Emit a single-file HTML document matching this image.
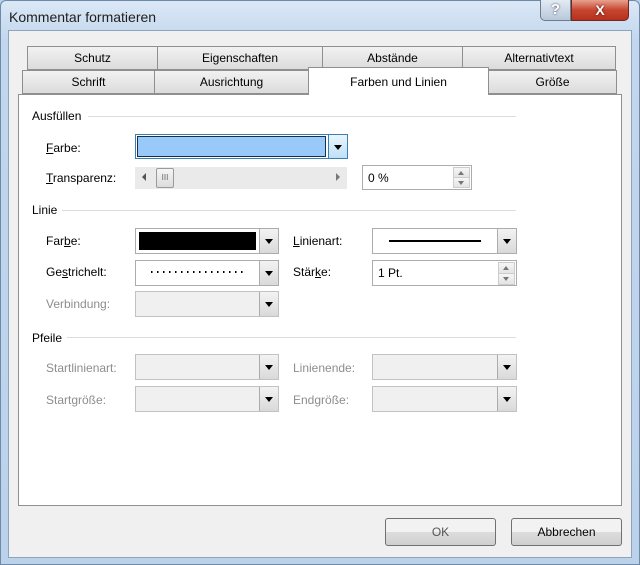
<!DOCTYPE html>
<html><head><meta charset="utf-8"><style>
*{box-sizing:border-box;margin:0;padding:0}
body{width:640px;height:565px;overflow:hidden;font-family:"Liberation Sans",sans-serif;font-size:12px;color:#000;position:relative;background:#b9d1ea}
.a{position:absolute}
.frame{left:0;top:0;width:640px;height:565px;background:linear-gradient(#dbe8f6,#c2d6ed 40px,#bcd2ea);border:1px solid #6d8aa8;border-radius:6px 6px 0 0}
.body{left:8px;top:30px;width:624px;height:528px;background:#f0f0f0;border:1px solid #8ea4bd}
.tab{position:absolute;height:24px;background:linear-gradient(#f2f2f2,#dcdcdc);border:1px solid #8e8f8f;text-align:center;line-height:22px;font-size:12px}
.panel{left:18px;top:94px;width:604px;height:412px;background:#fff;border:1px solid #8e8f8f}
.lbl{position:absolute;font-size:12px}
.dis{color:#8d8d8d}
.sec{position:absolute;font-size:12px}
.line{position:absolute;height:1px;background:#dcdcdc}
.cb{position:absolute;height:26px;border:1px solid #acacac;background:#fff}
.cb.d{background:#f0f0f0;border-color:#c2c2c2}
.btn{position:absolute;right:0;top:0;width:19px;height:100%;border-left:1px solid #acacac;background:linear-gradient(#f3f3f3,#d9d9d9)}
.btn:after{content:"";position:absolute;left:5px;top:10px;border-left:4px solid transparent;border-right:4px solid transparent;border-top:5px solid #000}
.sp{position:absolute;right:1px;width:17px;border:1px solid #ccc;background:linear-gradient(#f6f6f6,#e4e4e4)}
.up:after,.dn:after{content:"";position:absolute;left:4px;border-left:3px solid transparent;border-right:3px solid transparent}
.up:after{top:3px;border-bottom:4px solid #777}
.dn:after{top:3px;border-top:4px solid #777}
.pb{position:absolute;height:28px;border:1px solid #707070;border-radius:3px;background:linear-gradient(#f2f2f2 50%,#dddddd 50%,#cfcfcf);text-align:center;line-height:26px;font-size:12px}
u{text-decoration:underline}
</style></head><body>
<div class="a frame"></div>
<div class="a" style="left:9px;top:9px;font-size:14px;color:#1e1e1e">Kommentar formatieren</div>
<div class="a" style="left:540px;top:0;width:31px;height:21px;border:1px solid #6d7d90;border-top:none;border-radius:0 0 0 5px;background:linear-gradient(#e3ebf4,#b8c8da);text-align:center;color:#fff;font-weight:bold;font-size:15px;line-height:20px;text-shadow:0 0 2px #445">?</div>
<div class="a" style="left:571px;top:0;width:58px;height:21px;border:1px solid #6a2a20;border-top:none;border-radius:0 0 5px 0;background:linear-gradient(#e8a290,#c7452f 50%,#b8301d);text-align:center;color:#fff;font-weight:bold;font-size:14px;line-height:20px;text-shadow:0 0 2px #400">X</div>
<div class="a body"></div>
<div class="tab" style="left:27px;top:46px;width:131px">Schutz</div>
<div class="tab" style="left:157px;top:46px;width:166px">Eigenschaften</div>
<div class="tab" style="left:322px;top:46px;width:141px">Abstände</div>
<div class="tab" style="left:462px;top:46px;width:154px">Alternativtext</div>
<div class="tab" style="left:22px;top:70px;width:133px">Schrift</div>
<div class="tab" style="left:154px;top:70px;width:155px">Ausrichtung</div>
<div class="tab" style="left:488px;top:70px;width:129px">Größe</div>
<div class="a panel"></div>
<div class="tab" style="left:308px;top:67px;width:181px;height:28px;background:#fff;border-bottom:none;line-height:28px">Farben und Linien</div>

<div class="sec" style="left:32px;top:109px">Ausfüllen</div><div class="line" style="left:88px;top:116px;width:428px"></div>
<div class="lbl" style="left:46px;top:141px"><u>F</u>arbe:</div>
<div class="cb" style="left:135px;top:134px;width:213px;height:25px;border:1px solid #3c7fb1;background:#fff"><div class="a" style="left:1px;top:1px;right:21px;bottom:1px;background:#99c9f8;border:1px solid #12324d"></div><div class="btn" style="background:linear-gradient(#eaf5fd,#bfe0f7);border-left-color:#3c7fb1"></div></div>
<div class="lbl" style="left:46px;top:171px"><u>T</u>ransparenz:</div>
<div class="a" style="left:135px;top:167px;width:212px;height:22px;background:#eaeaea"></div>
<div class="a" style="left:142px;top:173px;border-top:4px solid transparent;border-bottom:4px solid transparent;border-right:4px solid #555"></div>
<div class="a" style="left:336px;top:173px;border-top:4px solid transparent;border-bottom:4px solid transparent;border-left:4px solid #777"></div>
<div class="a" style="left:156px;top:168px;width:18px;height:20px;border:1px solid #9a9a9a;border-radius:2px;background:linear-gradient(#f5f5f5,#dcdcdc);font-size:8px;text-align:center;line-height:18px;color:#666">III</div>
<div class="cb" style="left:362px;top:165px;width:110px;height:25px"><div class="a" style="left:5px;top:5px">0 %</div><div class="sp up" style="top:1px;height:11px"></div><div class="sp dn" style="top:11px;height:11px"></div></div>

<div class="sec" style="left:32px;top:203px">Linie</div><div class="line" style="left:62px;top:210px;width:454px"></div>
<div class="lbl" style="left:46px;top:234px">Far<u>b</u>e:</div>
<div class="cb" style="left:135px;top:228px;width:144px"><div class="a" style="left:3px;top:3px;right:22px;bottom:3px;background:#000"></div><div class="btn"></div></div>
<div class="lbl" style="left:293px;top:234px"><u>L</u>inienart:</div>
<div class="cb" style="left:372px;top:228px;width:145px"><div class="a" style="left:16px;top:11px;width:92px;height:2px;background:#000"></div><div class="btn"></div></div>
<div class="lbl" style="left:46px;top:265px">Ge<u>s</u>trichelt:</div>
<div class="cb" style="left:135px;top:260px;width:144px"><div class="a" style="left:15px;top:10px;width:92px;height:2px;background:repeating-linear-gradient(90deg,#000 0 1.5px,transparent 1.5px 6px)"></div><div class="btn"></div></div>
<div class="lbl" style="left:293px;top:265px">Stär<u>k</u>e:</div>
<div class="cb" style="left:372px;top:260px;width:145px"><div class="a" style="left:5px;top:5px">1 Pt.</div><div class="sp up" style="top:1px;height:12px"></div><div class="sp dn" style="top:12px;height:12px"></div></div>
<div class="lbl dis" style="left:46px;top:297px">Verbindung:</div>
<div class="cb d" style="left:135px;top:291px;width:144px"><div class="btn"></div></div>

<div class="sec" style="left:32px;top:331px">Pfeile</div><div class="line" style="left:67px;top:337px;width:449px"></div>
<div class="lbl dis" style="left:46px;top:361px">Startlinienart:</div>
<div class="cb d" style="left:135px;top:354px;width:144px"><div class="btn"></div></div>
<div class="lbl dis" style="left:293px;top:361px">Linienende:</div>
<div class="cb d" style="left:372px;top:354px;width:145px"><div class="btn"></div></div>
<div class="lbl dis" style="left:46px;top:393px">Startgröße:</div>
<div class="cb d" style="left:135px;top:386px;width:144px"><div class="btn"></div></div>
<div class="lbl dis" style="left:293px;top:393px">Endgröße:</div>
<div class="cb d" style="left:372px;top:386px;width:145px"><div class="btn"></div></div>

<div class="pb" style="left:385px;top:518px;width:111px;color:#555">OK</div>
<div class="pb" style="left:511px;top:518px;width:111px">Abbrechen</div>
</body></html>
